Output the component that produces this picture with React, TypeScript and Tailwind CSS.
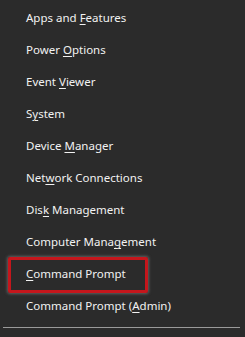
import React from 'react';

type Item = { pre: string; key: string; post: string };

const items: Item[] = [
  { pre: 'Apps and ', key: 'F', post: 'eatures' },
  { pre: 'Power ', key: 'O', post: 'ptions' },
  { pre: 'Event ', key: 'V', post: 'iewer' },
  { pre: 'S', key: 'y', post: 'stem' },
  { pre: 'Device ', key: 'M', post: 'anager' },
  { pre: 'Net', key: 'w', post: 'ork Connections' },
  { pre: 'Dis', key: 'k', post: ' Management' },
  { pre: 'Computer Mana', key: 'g', post: 'ement' },
  { pre: '', key: 'C', post: 'ommand Prompt' },
  { pre: 'Command Prompt (', key: 'A', post: 'dmin)' },
];

export default function App() {
  return (
    <div
      className="w-[245px] h-[337px] bg-[#2b2b2b] overflow-hidden pt-[2px]"
      style={{ fontFamily: '"Noto Sans", "Open Sans", sans-serif' }}
    >
      <div className="flex flex-col">
        {items.map((it, i) => (
          <div key={i} className="relative h-[32px] flex items-center pl-[26px] text-[11.5px] text-[#f2f2f2]">
            <span className="leading-none">
              {it.pre}
              <span className="underline underline-offset-[2px] decoration-1">{it.key}</span>
              {it.post}
            </span>
            {i === 8 && (
              <div className="absolute left-[8px] top-[-1px] w-[140px] h-[36px] border-[3px] border-[#c4161c] rounded-[2px] shadow-[0_0_3px_1px_rgba(150,150,150,0.5)]" />
            )}
          </div>
        ))}
      </div>
      <div className="mt-[5px] ml-[3px] w-[237px] h-[1px] bg-[#9a9a9a]" />
    </div>
  );
}
